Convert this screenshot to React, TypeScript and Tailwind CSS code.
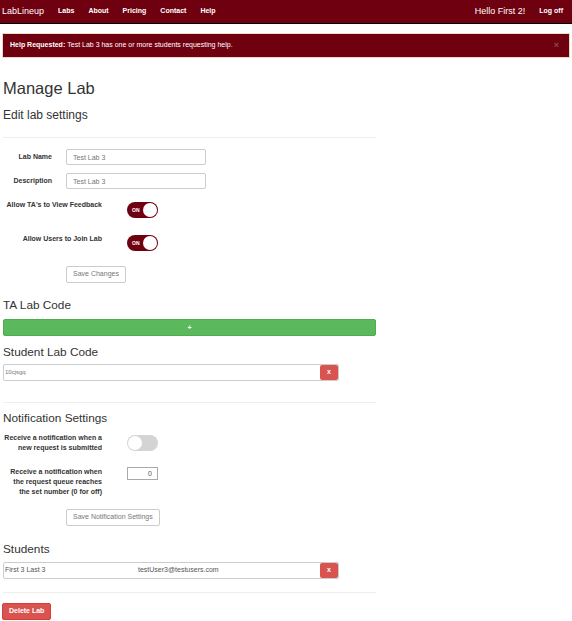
import React, { useState } from 'react';

const Toggle: React.FC<{ on: boolean; onClick: () => void }> = ({ on, onClick }) => (
  <button
    onClick={onClick}
    className={`relative block w-[31px] h-[16px] rounded-full shrink-0 ${on ? 'bg-[#6f0010]' : 'bg-[#d4d4d4]'}`}
  >
    {on && <span className="absolute left-[5px] top-[4px] text-[5px] leading-[8px] font-bold text-white">ON</span>}
    <span
      className={`absolute top-[1px] w-[14px] h-[14px] rounded-full bg-white ${on ? 'left-[16px]' : 'left-[1px]'}`}
    />
  </button>
);

export default function App() {
  const [taFeedback, setTaFeedback] = useState(true);
  const [joinLab, setJoinLab] = useState(true);
  const [notifyNew, setNotifyNew] = useState(false);

  return (
    <div className="w-[572px] min-h-[621px] bg-white text-[#333] font-['Liberation_Sans',Arial,sans-serif]">
      {/* Navbar */}
      <div className="h-[24px] bg-[#6f0010] border-b border-black flex items-center px-[2px]">
        <span className="text-[9px] text-white mr-[14px]">LabLineup</span>
        <div className="flex gap-[14px] text-[7px] font-bold text-white">
          <span>Labs</span>
          <span>About</span>
          <span>Pricing</span>
          <span>Contact</span>
          <span>Help</span>
        </div>
        <div className="ml-auto flex items-center gap-[14px] pr-[7px] text-white">
          <span className="text-[9px]">Hello First 2!</span>
          <span className="text-[7px] font-bold">Log off</span>
        </div>
      </div>

      {/* Alert */}
      <div className="mt-[9px] mx-[2px] h-[25px] bg-[#6f0010] border border-[#ebd9c6] flex items-center pl-[7px] pr-[10px] text-[7px] text-white">
        <span className="font-bold mr-[2px]">Help Requested:</span>
        <span>Test Lab 3 has one or more students requesting help.</span>
        <span className="ml-auto text-[9px] text-[#8a4a50] font-bold leading-none">×</span>
      </div>

      <div className="px-[3px] w-[379px] text-[7px]">
        <h1 className="text-[16.5px] mt-[20px] leading-[20px]">Manage Lab</h1>
        <h2 className="text-[12px] mt-[9px] leading-[16px]">Edit lab settings</h2>
        <hr className="mt-[14px] border-t border-[#eee]" />

        {/* Form */}
        <div className="flex items-center h-[16px] mt-[11px]">
          <span className="w-[49px] text-right font-bold">Lab Name</span>
          <input
            defaultValue="Test Lab 3"
            className="ml-[14px] w-[140px] h-[16px] border border-[#ccc] rounded-[2px] px-[6px] text-[7px] text-[#777] outline-none"
          />
        </div>
        <div className="flex items-center h-[16px] mt-[8px]">
          <span className="w-[49px] text-right font-bold">Description</span>
          <input
            defaultValue="Test Lab 3"
            className="ml-[14px] w-[140px] h-[16px] border border-[#ccc] rounded-[2px] px-[6px] text-[7px] text-[#777] outline-none"
          />
        </div>
        <div className="flex items-start mt-[13px]">
          <span className="w-[99px] text-right font-bold leading-[10px] mt-[-2px]">Allow TA's to View Feedback</span>
          <div className="ml-[25px] flex">
            <Toggle on={taFeedback} onClick={() => setTaFeedback(!taFeedback)} />
          </div>
        </div>
        <div className="flex items-start mt-[17px]">
          <span className="w-[99px] text-right font-bold leading-[10px] mt-[-1px]">Allow Users to Join Lab</span>
          <div className="ml-[25px] flex">
            <Toggle on={joinLab} onClick={() => setJoinLab(!joinLab)} />
          </div>
        </div>
        <div className="mt-[15px] ml-[63px] flex">
          <button className="h-[17px] px-[6px] border border-[#ccc] rounded-[2px] text-[7px] text-[#777] bg-white">
            Save Changes
          </button>
        </div>

        <h3 className="text-[11.8px] mt-[14px] leading-[16px]">TA Lab Code</h3>
        <button className="block mt-[6px] w-full h-[17px] bg-[#5cb85c] border border-[#4cae4c] rounded-[2px] text-white text-[7px] font-bold leading-none">
          +
        </button>

        <h3 className="text-[11.8px] mt-[8px] leading-[16px]">Student Lab Code</h3>
        <div className="mt-[4px] w-[336px] h-[17px] border border-[#ccc] rounded-[2px] flex items-center">
          <span className="pl-[1px] text-[6px] text-[#777]">10cjsgq</span>
          <button className="ml-auto h-[15px] w-[18px] bg-[#d9534f] rounded-[2px] text-white text-[7px] font-bold">x</button>
        </div>

        <hr className="mt-[21px] border-t border-[#eee]" />
        <h3 className="text-[11.8px] mt-[7px] leading-[16px]">Notification Settings</h3>

        <div className="flex items-start mt-[9px]">
          <span className="w-[99px] text-right font-bold leading-[10px] mt-[-2px]">
            Receive a notification when a<br />new request is submitted
          </span>
          <div className="ml-[25px] flex">
            <Toggle on={notifyNew} onClick={() => setNotifyNew(!notifyNew)} />
          </div>
        </div>
        <div className="flex items-start mt-[14px]">
          <span className="w-[99px] text-right font-bold leading-[10px]">
            Receive a notification when<br />the request queue reaches<br />the set number (0 for off)
          </span>
          <input
            defaultValue="0"
            className="ml-[25px] w-[31px] h-[13px] border border-[#aaa] text-right pr-[5px] text-[7px] text-[#555] outline-none"
          />
        </div>
        <div className="mt-[12px] ml-[63px] flex">
          <button className="h-[17px] px-[6px] border border-[#ccc] rounded-[2px] text-[7px] text-[#777] bg-white">
            Save Notification Settings
          </button>
        </div>

        <h3 className="text-[11.8px] mt-[15px] leading-[16px]">Students</h3>
        <div className="mt-[5px] w-[336px] h-[17px] border border-[#ccc] rounded-[2px] flex items-center">
          <span className="pl-[1px] w-[134px] text-[#555]">First 3 Last 3</span>
          <span className="text-[#555]">testUser3@testusers.com</span>
          <button className="ml-auto h-[15px] w-[18px] bg-[#d9534f] rounded-[2px] text-white text-[7px] font-bold">x</button>
        </div>

        <hr className="mt-[13px] border-t border-[#eee]" />
        <div className="flex mt-[10px] ml-[-1px]">
          <button className="h-[17px] px-[6px] bg-[#d9534f] border border-[#d43f3a] rounded-[2px] text-white text-[7px] font-bold">
            Delete Lab
          </button>
        </div>
      </div>
    </div>
  );
}
